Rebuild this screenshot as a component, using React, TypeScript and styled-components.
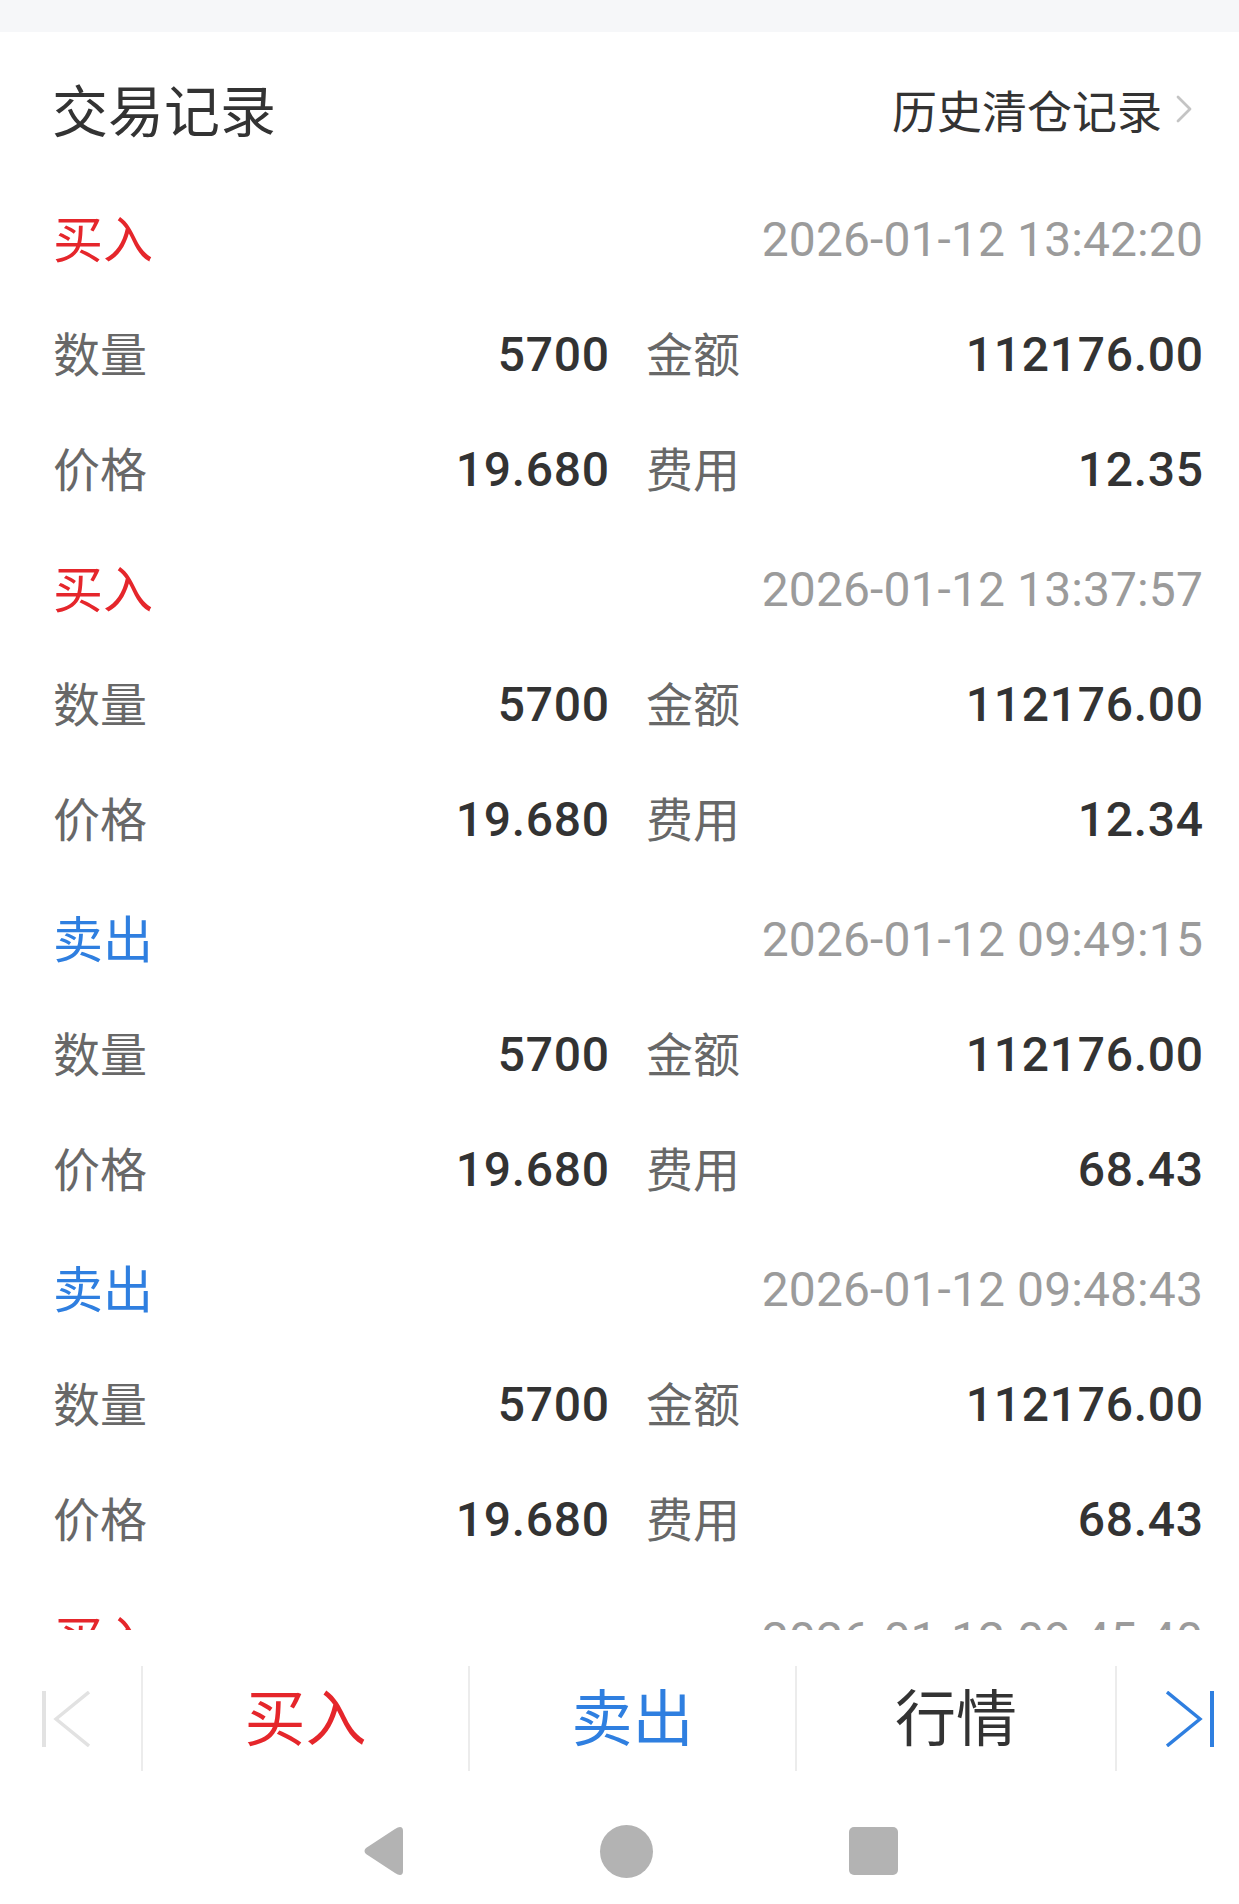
import React from "react";
import styled, { createGlobalStyle } from "styled-components";

const GlobalStyle = createGlobalStyle`
  html, body {
    margin: 0;
    padding: 0;
    background: #ffffff;
  }
  body {
    width: 1239px;
    height: 1904px;
    overflow: hidden;
    font-family: "Noto Sans CJK SC", "Noto Sans", sans-serif;
    -webkit-font-smoothing: antialiased;
  }
  * { box-sizing: border-box; }
`;

const CJK = `"Noto Sans CJK SC", "Noto Sans", sans-serif`;
const NUM = `Roboto, "Noto Sans CJK SC", sans-serif`;
const RED = "#e5262b";
const BLUE = "#2f7fe0";

const Page = styled.div`
  width: 1239px;
  height: 1904px;
  display: flex;
  flex-direction: column;
  background: #ffffff;
`;

const StatusStrip = styled.div`
  height: 32px;
  flex: none;
  background: #f6f7f9;
`;

const Scroller = styled.div`
  height: 1598px;
  flex: none;
  overflow: hidden;
`;

const Header = styled.div`
  height: 150px;
  padding: 10px 46px 0 52px;
  display: flex;
  align-items: center;
  justify-content: space-between;
`;

const Title = styled.h1`
  margin: 0 0 8px;
  font-family: ${CJK};
  font-size: 56px;
  line-height: 1;
  font-weight: 400;
  color: #333333;
`;

const HistoryLink = styled.a`
  display: flex;
  align-items: center;
  gap: 13px;
  margin-bottom: 6px;
  font-family: ${CJK};
  font-size: 45px;
  line-height: 1;
  color: #333333;
  text-decoration: none;
`;

const Record = styled.section`
  padding-bottom: 5px;
`;

const Row = styled.div`
  height: 115px;
  padding: 0 36px 0 53px;
  display: flex;
  align-items: center;
  justify-content: space-between;
`;

const DataRow = styled(Row)`
  display: grid;
  grid-template-columns: 556px 1fr;
  column-gap: 37px;
`;

const Pair = styled.div`
  display: flex;
  align-items: center;
  justify-content: space-between;
`;

const TypeLabel = styled.span<{ $side: "buy" | "sell" }>`
  margin-bottom: 8px;
  font-family: ${CJK};
  font-size: 50px;
  line-height: 1;
  color: ${(p) => (p.$side === "buy" ? RED : BLUE)};
`;

const Time = styled.span`
  font-family: ${NUM};
  font-size: 48px;
  line-height: 1;
  letter-spacing: 0.1px;
  color: #9b9b9b;
`;

const Label = styled.span`
  margin-bottom: 7px;
  font-family: ${CJK};
  font-size: 47px;
  line-height: 1;
  color: #686868;
`;

const Value = styled.span`
  font-family: ${NUM};
  font-size: 48px;
  line-height: 1;
  font-weight: 500;
  letter-spacing: 0.7px;
  margin-right: -0.7px;
  color: #333333;
`;

const NavRow = styled.nav`
  height: 176px;
  flex: none;
  padding: 36px 0 35px;
  display: grid;
  grid-template-columns: 141px 327px 327px 320px 1fr;
`;

const NavCell = styled.div<{ $divider?: boolean; $align?: "start" | "center" | "end" }>`
  height: 105px;
  display: flex;
  align-items: center;
  justify-content: ${(p) =>
    p.$align === "start" ? "flex-start" : p.$align === "end" ? "flex-end" : "center"};
  border-left: ${(p) => (p.$divider ? "2px solid #ececec" : "none")};
  padding: ${(p) => (p.$align === "start" ? "0 0 0 42px" : p.$align === "end" ? "0 25px 0 0" : "0")};
`;

const NavText = styled.span<{ $color: string }>`
  margin-bottom: 8px;
  font-family: ${CJK};
  font-size: 61px;
  line-height: 1;
  color: ${(p) => p.$color};
`;

const SystemBar = styled.div`
  flex: 1;
  display: flex;
  align-items: center;
  justify-content: center;
  gap: 196px;
  padding: 0 0 8px 20px;
`;

const HomeDot = styled.div`
  width: 53px;
  height: 53px;
  border-radius: 50%;
  background: #b3b3b3;
`;

const RecentSquare = styled.div`
  width: 49px;
  height: 48px;
  border-radius: 5px;
  background: #b3b3b3;
`;

type Trade = {
  side: "buy" | "sell";
  time: string;
  qty: string;
  amount: string;
  price: string;
  fee: string;
};

const trades: Trade[] = [
  { side: "buy", time: "2026-01-12 13:42:20", qty: "5700", amount: "112176.00", price: "19.680", fee: "12.35" },
  { side: "buy", time: "2026-01-12 13:37:57", qty: "5700", amount: "112176.00", price: "19.680", fee: "12.34" },
  { side: "sell", time: "2026-01-12 09:49:15", qty: "5700", amount: "112176.00", price: "19.680", fee: "68.43" },
  { side: "sell", time: "2026-01-12 09:48:43", qty: "5700", amount: "112176.00", price: "19.680", fee: "68.43" },
  { side: "buy", time: "2026-01-12 09:45:40", qty: "5700", amount: "112176.00", price: "19.680", fee: "12.35" },
];

const Chevron = () => (
  <svg width="18" height="28" viewBox="0 0 18 28" fill="none">
    <path d="M3 2 L15 14 L3 26" stroke="#c4c4c4" strokeWidth="2.8" strokeLinecap="round" strokeLinejoin="round" />
  </svg>
);

const FirstIcon = () => (
  <svg width="48" height="56" viewBox="0 0 48 56" fill="none">
    <path d="M2 0 V56" stroke="#e2e2e2" strokeWidth="4" />
    <path d="M47 1 L14 28 L47 55" stroke="#e2e2e2" strokeWidth="3.4" strokeLinejoin="miter" />
  </svg>
);

const LastIcon = () => (
  <svg width="48" height="56" viewBox="0 0 48 56" fill="none">
    <path d="M46 0 V56" stroke={BLUE} strokeWidth="4" />
    <path d="M1 1 L34 28 L1 55" stroke={BLUE} strokeWidth="3.4" strokeLinejoin="miter" />
  </svg>
);

const BackTriangle = () => (
  <svg width="42" height="54" viewBox="0 0 42 54">
    <path
      d="M38 3 Q41 3 41 7 L41 47 Q41 51 38 51 Q36 51 33 49 L4 30 Q1 27 4 24 L33 5 Q36 3 38 3 Z"
      fill="#b3b3b3"
    />
  </svg>
);

export default function App() {
  return (
    <Page>
      <GlobalStyle />
      <StatusStrip />
      <Scroller>
        <Header>
          <Title>交易记录</Title>
          <HistoryLink href="#">
            历史清仓记录
            <Chevron />
          </HistoryLink>
        </Header>
        {trades.map((t, i) => (
          <Record key={i}>
            <Row>
              <TypeLabel $side={t.side}>{t.side === "buy" ? "买入" : "卖出"}</TypeLabel>
              <Time>{t.time}</Time>
            </Row>
            <DataRow>
              <Pair>
                <Label>数量</Label>
                <Value>{t.qty}</Value>
              </Pair>
              <Pair>
                <Label>金额</Label>
                <Value>{t.amount}</Value>
              </Pair>
            </DataRow>
            <DataRow>
              <Pair>
                <Label>价格</Label>
                <Value>{t.price}</Value>
              </Pair>
              <Pair>
                <Label>费用</Label>
                <Value>{t.fee}</Value>
              </Pair>
            </DataRow>
          </Record>
        ))}
      </Scroller>
      <NavRow>
        <NavCell $align="start">
          <FirstIcon />
        </NavCell>
        <NavCell $divider>
          <NavText $color={RED}>买入</NavText>
        </NavCell>
        <NavCell $divider>
          <NavText $color={BLUE}>卖出</NavText>
        </NavCell>
        <NavCell $divider>
          <NavText $color="#333333">行情</NavText>
        </NavCell>
        <NavCell $divider $align="end">
          <LastIcon />
        </NavCell>
      </NavRow>
      <SystemBar>
        <BackTriangle />
        <HomeDot />
        <RecentSquare />
      </SystemBar>
    </Page>
  );
}
